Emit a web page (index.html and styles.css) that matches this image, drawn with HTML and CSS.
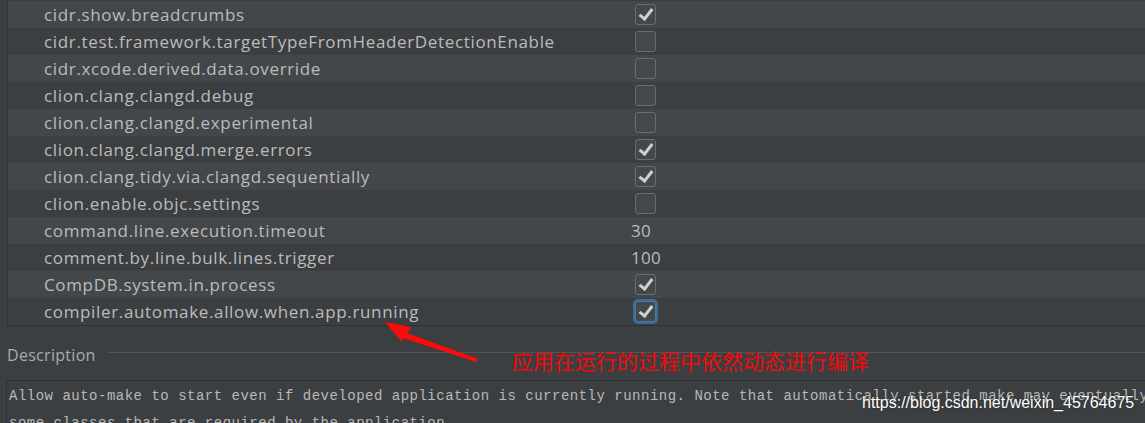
FILE: index.html
```html
<!DOCTYPE html>
<html>
<head>
<meta charset="utf-8">
<link rel="stylesheet" href="styles.css">
</head>
<body>
<div class="page">
  <div class="table">
    <div class="row"><span class="name">cidr.show.breadcrumbs</span><span class="val"><span class="cb on"></span></span></div>
    <div class="row"><span class="name">cidr.test.framework.targetTypeFromHeaderDetectionEnable</span><span class="val"><span class="cb"></span></span></div>
    <div class="row"><span class="name">cidr.xcode.derived.data.override</span><span class="val"><span class="cb"></span></span></div>
    <div class="row"><span class="name">clion.clang.clangd.debug</span><span class="val"><span class="cb"></span></span></div>
    <div class="row"><span class="name">clion.clang.clangd.experimental</span><span class="val"><span class="cb"></span></span></div>
    <div class="row"><span class="name">clion.clang.clangd.merge.errors</span><span class="val"><span class="cb on"></span></span></div>
    <div class="row"><span class="name">clion.clang.tidy.via.clangd.sequentially</span><span class="val"><span class="cb on"></span></span></div>
    <div class="row"><span class="name">clion.enable.objc.settings</span><span class="val"><span class="cb"></span></span></div>
    <div class="row"><span class="name">command.line.execution.timeout</span><span class="val"><span class="num">30</span></span></div>
    <div class="row"><span class="name">comment.by.line.bulk.lines.trigger</span><span class="val"><span class="num">100</span></span></div>
    <div class="row"><span class="name">CompDB.system.in.process</span><span class="val"><span class="cb on"></span></span></div>
    <div class="row"><span class="name">compiler.automake.allow.when.app.running</span><span class="val"><span class="cb on focus"></span></span></div>
  </div>
  <div class="desc-head"><span class="desc-label">Description</span><span class="desc-line"></span></div>
  <div class="desc-body">
    <div class="desc-text">Allow auto-make to start even if developed application is currently running. Note that automatically started make may eventually</div>
    <div class="desc-text">some classes that are required by the application.</div>
  </div>

  <svg class="arrow" width="1145" height="423" viewBox="0 0 1145 423">
    <polygon points="385,322 411,327 407,333 478,359 476,362 403,338 402,342" fill="#ff0a0a"/>
  </svg>
  <div class="note">应用在运行的过程中依然动态进行编译</div>
  <div class="mark">https://blog.csdn.net/weixin_45764675</div>
</div>
</body>
</html>
```
FILE: styles.css
```css
html, body {
  margin: 0;
  padding: 0;
  background: #3c3f41;
  overflow: hidden;
}
.page {
  position: relative;
  width: 1145px;
  height: 423px;
  padding-top: 1px;
  box-sizing: border-box;
}
.table {
  margin-left: 7px;
  border-left: 1px solid #323436;
  border-bottom: 1px solid #2f3133;
}
.row {
  display: flex;
  align-items: center;
  height: 27px;
  font-family: "Open Sans", "Noto Sans", sans-serif;
  font-size: 17px;
  letter-spacing: 0.65px;
  color: #bbbbbb;
}
.row:nth-child(odd) { background: #43474a; }
.row:nth-child(even) { background: #3c3f41; }
.name {
  width: 587px;
  padding-left: 36px;
  white-space: nowrap;
}
.val {
  display: flex;
  align-items: center;
}
.num { margin-left: 0; letter-spacing: 0.3px; }
.cb {
  display: block;
  box-sizing: border-box;
  width: 21px;
  height: 21px;
  margin-left: 4px;
  border: 1px solid #6a6c6e;
  border-radius: 3px;
  background: #43494a;
  position: relative;
}
.cb.on::after {
  content: "";
  position: absolute;
  left: 6px;
  top: 1px;
  width: 5px;
  height: 11px;
  border-right: 3px solid #d0d0d0;
  border-bottom: 3px solid #d0d0d0;
  transform: rotate(38deg);
}
.cb.focus {
  box-shadow: 0 0 0 2px #3e6a9c;
  border-color: #4a78aa;
}
.desc-head {
  display: flex;
  align-items: center;
  margin: 18px 0 0 7px;
  height: 21px;
}
.desc-label {
  font-family: "Open Sans", "Noto Sans", sans-serif;
  font-size: 16px;
  letter-spacing: 0.3px;
  color: #a8abad;
}
.desc-line {
  flex: 1;
  height: 1px;
  background: #515456;
  margin-left: 12px;
  margin-top: -4px;
}
.desc-body {
  margin: 15px 0 0 6px;
  border-top: 1px solid #2e3032;
  border-left: 1px solid #2e3032;
  padding: 2px 0 0 2px;
}
.desc-text {
  font-family: "Liberation Mono", monospace;
  font-size: 14px;
  letter-spacing: 0.5px;
  line-height: 27px;
  color: #b9b9b9;
  white-space: nowrap;
}
.arrow {
  position: absolute;
  left: 0;
  top: 0;
}
.note {
  position: absolute;
  left: 512px;
  top: 346px;
  font-family: "Noto Sans CJK SC", sans-serif;
  font-size: 21px;
  line-height: 28px;
  color: #f20a0a;
  white-space: nowrap;
}
.mark {
  position: absolute;
  left: 862px;
  top: 394px;
  font-family: "Liberation Sans", Arial, sans-serif;
  font-size: 16px;
  color: #ffffff;
  text-shadow: 0 0 2px rgba(0,0,0,0.5);
  white-space: nowrap;
}
```
